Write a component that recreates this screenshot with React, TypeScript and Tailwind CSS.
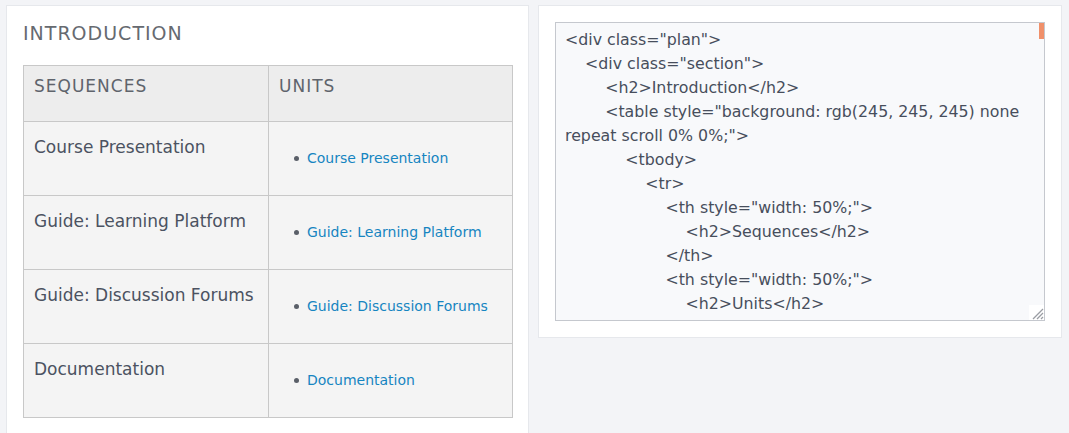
import React from "react";

const rows = [
  "Course Presentation",
  "Guide: Learning Platform",
  "Guide: Discussion Forums",
  "Documentation",
];

const code = `<div class="plan">
    <div class="section">
        <h2>Introduction</h2>
        <table style="background: rgb(245, 245, 245) none repeat scroll 0% 0%;">
            <tbody>
                <tr>
                    <th style="width: 50%;">
                        <h2>Sequences</h2>
                    </th>
                    <th style="width: 50%;">
                        <h2>Units</h2>`;

function ResizeGrip() {
  return (
    <svg width="15" height="15" viewBox="0 0 15 15" className="absolute right-0 bottom-0 bg-white">
      <path d="M14 4 L4 14 M14 8 L8 14 M14 12 L12 14" stroke="#9a9da3" strokeWidth="1.3" />
    </svg>
  );
}

export default function App() {
  return (
    <div
      className="flex gap-[9px] bg-[#f3f4f7] pl-[6px] pr-[7px] pt-[5px] h-[433px] overflow-hidden"
      style={{ fontFamily: '"DejaVu Sans", Verdana, sans-serif' }}
    >
      {/* Left: rendered plan */}
      <div className="w-[523px] shrink-0 bg-white border border-[#e6e8ec] px-[16px] pt-[15px] pb-[20px] self-start">
        <h2 className="text-[19px] leading-[24px] tracking-[1px] text-[#666a70] mb-[20px]">
          INTRODUCTION
        </h2>
        <table className="w-[490px] border-collapse table-fixed bg-[#f4f4f4]">
          <thead>
            <tr className="h-[56px]">
              <th className="w-[245px] border border-[#c8c8c8] bg-[#ededed] align-top text-left font-normal pl-[10px] pt-[8px] text-[17px] leading-[24px] tracking-[1px] text-[#5f646c]">
                SEQUENCES
              </th>
              <th className="border border-[#c8c8c8] bg-[#ededed] align-top text-left font-normal pl-[10px] pt-[8px] text-[17px] leading-[24px] tracking-[1px] text-[#5f646c]">
                UNITS
              </th>
            </tr>
          </thead>
          <tbody>
            {rows.map((r) => (
              <tr key={r} className="h-[74px]">
                <td className="border border-[#c8c8c8] align-top pl-[10px] pt-[13px] text-[17px] leading-[24px] text-[#4b5261]">
                  {r}
                </td>
                <td className="border border-[#c8c8c8] align-top pt-[26px] pl-[25px]">
                  <ul className="text-[14px] leading-[20px]">
                    <li className="flex items-center gap-[8px]">
                      <span className="w-[5px] h-[5px] rounded-full bg-[#5a5f68] shrink-0" />
                      <a href="#" className="text-[#1685c1]">
                        {r}
                      </a>
                    </li>
                  </ul>
                </td>
              </tr>
            ))}
          </tbody>
        </table>
      </div>

      {/* Right: HTML source editor */}
      <div className="w-[524px] shrink-0 h-[333px] bg-white border border-[#e6e8ec] p-[16px]">
        <div className="relative h-[299px] border border-[#c5c8ce] bg-[#f8f9fb] overflow-hidden">
          <div className="h-full overflow-hidden pl-[9px] pr-[10px] pt-[5px] whitespace-pre-wrap text-[15.8px] leading-[24px] text-[#474e5c]">
            {code}
          </div>
          <div className="absolute right-0 top-0 w-[5px] h-[16px] bg-[#f0906a]" />
          <ResizeGrip />
        </div>
      </div>
    </div>
  );
}
